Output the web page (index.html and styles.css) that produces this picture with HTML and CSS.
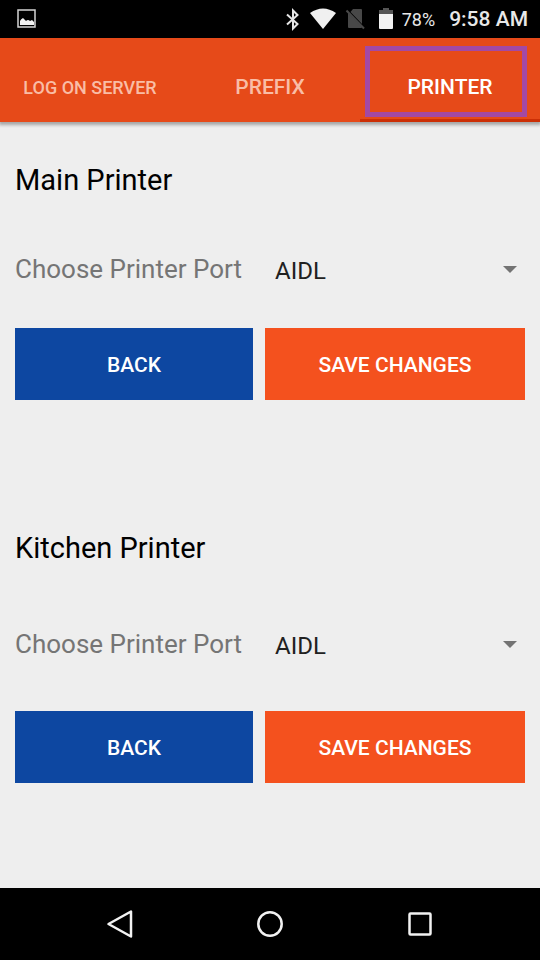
FILE: index.html
```html
<!DOCTYPE html>
<html lang="en">
<head>
<meta charset="utf-8">
<meta name="viewport" content="width=device-width, initial-scale=1">
<title>Printer settings</title>
<link rel="stylesheet" href="styles.css">
</head>
<body>
<div class="status-bar">
  <svg class="status-photo" width="20" height="20" viewBox="0 0 20 20" aria-hidden="true">
    <rect x="1" y="1" width="17" height="17" fill="none" stroke="#d4d4d4" stroke-width="1.5"/>
    <path d="M3 16v-4q1-2 3-3l2 2 1 1q2-2 4 0l2-1 2 2v3z" fill="#f2f2f2"/>
  </svg>
  <div class="status-icons">
    <svg width="16" height="24" viewBox="0 0 16 24" aria-hidden="true">
      <path d="M3 7.500l10.500 9.500-4.500 4.500v-18l4.500 4.500L3 17.500" fill="none" stroke="#e6e6e6" stroke-width="2"/>
    </svg>
    <svg class="status-wifi" width="26" height="22" viewBox="0 0 26 22" aria-hidden="true">
      <path d="M0 5Q13-4 26 5L13 21z" fill="#f0f0f0"/>
    </svg>
    <svg class="status-sim" width="20" height="22" viewBox="0 0 20 22" aria-hidden="true">
      <path d="M8 1h8q1 0 1 1v14L5.500 4zM3 5l14 14q0 1-1 1H4q-1 0-1-1z" fill="#484848"/>
      <path d="M1.500 2.500l17.500 18" stroke="#484848" stroke-width="2"/>
    </svg>
    <svg class="status-battery" width="14" height="22" viewBox="0 0 14 22" aria-hidden="true">
      <path d="M0 6V2h4V0h6v2h4v4z" fill="#555"/>
      <path d="M0 6h14v14q0 1-1 1H1q-1 0-1-1z" fill="#f2f2f2"/>
    </svg>
    <span class="battery-level">78%</span>
    <span class="clock">9:58 AM</span>
  </div>
</div>

<nav class="tabs">
  <a class="tab tab-small" href="#server">LOG ON SERVER</a>
  <a class="tab" href="#prefix">PREFIX</a>
  <a class="tab tab-active" href="#printer" aria-current="page">PRINTER</a>
</nav>

<main class="content" id="printer">
  <form class="printer">
    <h2 class="printer-title">Main Printer</h2>
    <div class="row">
      <label class="port-label" for="main-port">Choose Printer Port</label>
      <div class="port"><select id="main-port"><option>AIDL</option></select></div>
    </div>
    <div class="row">
      <button class="button button-back" type="button">BACK</button>
      <button class="button button-save" type="button">SAVE CHANGES</button>
    </div>
  </form>
  <form class="printer printer-roomy">
    <h2 class="printer-title">Kitchen Printer</h2>
    <div class="row">
      <label class="port-label" for="kitchen-port">Choose Printer Port</label>
      <div class="port"><select id="kitchen-port"><option>AIDL</option></select></div>
    </div>
    <div class="row">
      <button class="button button-back" type="button">BACK</button>
      <button class="button button-save" type="button">SAVE CHANGES</button>
    </div>
  </form>
</main>

<div class="nav-bar">
  <button type="button" aria-label="Back">
    <svg width="30" height="30" viewBox="0 0 30 30"><path d="M26 2.500v25L3.500 15z" fill="none" stroke="#f2f2f2" stroke-width="2.500" stroke-linejoin="round"/></svg>
  </button>
  <button type="button" aria-label="Home">
    <svg width="30" height="30" viewBox="0 0 30 30"><circle cx="15" cy="15" r="11.700" fill="none" stroke="#f2f2f2" stroke-width="2.500"/></svg>
  </button>
  <button type="button" aria-label="Recent apps">
    <svg width="30" height="30" viewBox="0 0 30 30"><rect x="4.500" y="4.500" width="21" height="21" rx="1" fill="none" stroke="#f2f2f2" stroke-width="2.500"/></svg>
  </button>
</div>
</body>
</html>
```
FILE: styles.css
```css
* {
  box-sizing: border-box;
}

body {
  margin: 0;
  min-height: 100vh;
  display: flex;
  flex-direction: column;
  background: #eee;
  color: #000;
  font-family: Roboto, "Liberation Sans", sans-serif;
}

.status-bar {
  height: 38px;
  padding: 0 12px 0 17px;
  display: flex;
  align-items: center;
  justify-content: space-between;
  background: #000;
  color: #e8e8e8;
}

.status-icons {
  display: flex;
  align-items: center;
}

.status-wifi {
  margin-left: 10px;
}

.status-sim {
  margin-left: 9px;
}

.status-battery {
  margin-left: 14px;
}

.battery-level {
  margin-left: 9px;
  font-size: 18px;
}

.clock {
  margin-left: 14px;
  font-size: 21px;
  font-weight: 500;
}

.tabs {
  height: 84px;
  display: grid;
  grid-template-columns: repeat(3, 1fr);
  background: #e64a19;
  box-shadow: 0 2px 3px 1px rgba(0, 0, 0, 0.3);
}

.tab {
  position: relative;
  display: flex;
  align-items: center;
  justify-content: center;
  padding-top: 14px;
  color: #f9bda6;
  font-size: 21px;
  font-weight: 500;
  text-decoration: none;
}

.tab-small {
  font-size: 18px;
}

.tab-active {
  color: #fff;
  box-shadow: inset 0 -3px #cc2f06;
}

.tab-active::after {
  content: "";
  position: absolute;
  inset: 8px 13px 5px 5px;
  border: 5px solid #a349a4;
}

.content {
  flex: 1;
  padding: 40px 15px;
}

.printer + .printer {
  margin-top: 130px;
}

.printer-title {
  margin: 0 0 48px;
  font-size: 29px;
  font-weight: 400;
  line-height: 36px;
}

.row {
  display: grid;
  grid-template-columns: 238fr 260fr;
  gap: 12px;
  align-items: center;
}

.row + .row {
  margin-top: 34px;
}

.printer-roomy .printer-title {
  margin-bottom: 55px;
}

.printer-roomy .row + .row {
  margin-top: 42px;
}

.port-label {
  padding-bottom: 2px;
  color: #757575;
  font-size: 26px;
  line-height: 36px;
  white-space: nowrap;
}

.port {
  position: relative;
}

.port select {
  display: block;
  width: 100%;
  height: 48px;
  padding: 2px 32px 0 10px;
  appearance: none;
  border: 0;
  background: transparent;
  color: #212121;
  font-family: inherit;
  font-size: 24px;
}

.port::after {
  content: "";
  position: absolute;
  top: 20px;
  right: 8px;
  border: 7px solid transparent;
  border-top-color: #737373;
  border-bottom: 0;
  pointer-events: none;
}

.button {
  height: 72px;
  padding: 2px 0 0;
  border: 0;
  color: #fff;
  font-family: inherit;
  font-size: 21px;
  font-weight: 500;
}

.button-back {
  background: #0d47a1;
}

.button-save {
  background: #f4511e;
}

.nav-bar {
  height: 72px;
  padding: 0 45px;
  display: grid;
  grid-template-columns: repeat(3, 1fr);
  background: #000;
}

.nav-bar button {
  display: flex;
  align-items: center;
  justify-content: center;
  border: 0;
  background: transparent;
}
```
